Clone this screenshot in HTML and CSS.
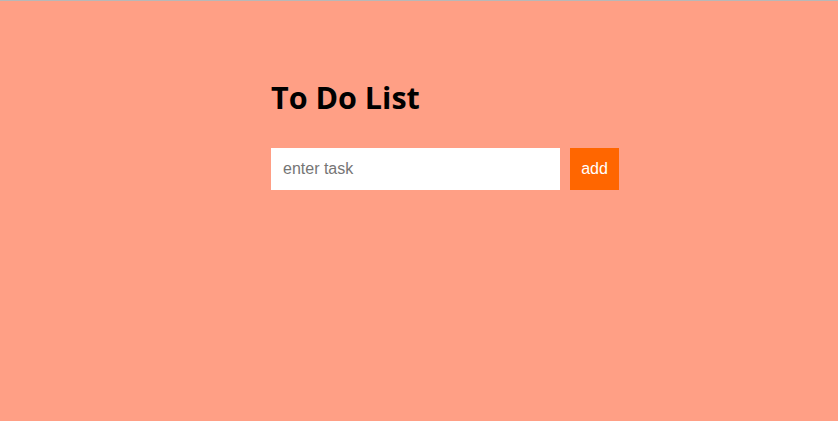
FILE: index.html
```html
<!DOCTYPE html>
<html>
<head>
<meta charset="utf-8">
<link rel="stylesheet" href="styles.css">
</head>
<body>
<div class="topline"></div>
<main class="app">
  <h1 class="title">To Do List</h1>
  <form class="add-row">
    <input class="task-input" type="text" placeholder="enter task">
    <button class="add-btn" type="button">add</button>
  </form>
</main>
</body>
</html>
```
FILE: styles.css
```css
html, body {
  margin: 0;
  padding: 0;
  height: 100%;
  background: #ff9f85;
}
.topline {
  height: 1px;
  background: #b8b8b8;
}
.app {
  padding-left: 271px;
  padding-top: 77px;
}
.title {
  margin: 0;
  font-family: "Open Sans", sans-serif;
  font-weight: 700;
  font-size: 30.5px;
  line-height: 38px;
  color: #000;
}
.add-row {
  display: flex;
  gap: 10px;
  margin-top: 32px;
}
.task-input {
  box-sizing: border-box;
  width: 289px;
  height: 42px;
  border: none;
  outline: none;
  padding: 0 12px;
  font-family: "Liberation Sans", Arial, sans-serif;
  font-size: 16px;
  background: #fff;
  margin: 0;
}
.task-input::placeholder {
  color: #757575;
}
.add-btn {
  box-sizing: border-box;
  width: 49px;
  height: 42px;
  border: none;
  margin: 0;
  background: #ff6600;
  color: #fff;
  font-family: "Liberation Sans", Arial, sans-serif;
  font-size: 16px;
  padding: 0;
}
```
